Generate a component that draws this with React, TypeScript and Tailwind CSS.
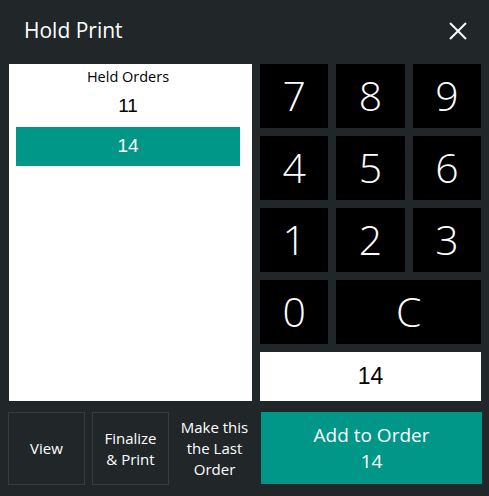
import React from "react";

const keys = ["7", "8", "9", "4", "5", "6", "1", "2", "3"];

export default function App() {
  return (
    <div className="w-[489px] h-[496px] bg-[#212729] text-white overflow-hidden [font-family:'Open_Sans','Noto_Sans',sans-serif]">
      {/* Header */}
      <div className="h-[64px] flex items-center justify-between pl-[24px] pr-[22px] pb-[4px]">
        <h1 className="text-[21px] leading-none">Hold Print</h1>
        <svg width="18" height="18" viewBox="0 0 18 18" className="mt-[1px]">
          <path d="M1 1 L17 17 M17 1 L1 17" stroke="#fff" strokeWidth="2" />
        </svg>
      </div>

      {/* Body */}
      <div className="flex gap-[8px] pl-[9px]">
        <div className="w-[243px] h-[337px] bg-white text-black flex flex-col">
          <div className="w-[238px] flex flex-col items-center">
            <div className="text-[14.5px] leading-none mt-[6px] h-[14px]">Held Orders</div>
            <div className="mt-[9px] h-[26px] flex items-center text-[19px] [font-family:'Liberation_Sans',Arial,sans-serif]">11</div>
          </div>
          <div className="mt-[8px] ml-[7px] w-[224px] h-[39px] bg-[#009688] text-white flex items-center justify-center text-[19px] [font-family:'Liberation_Sans',Arial,sans-serif]">
            14
          </div>
        </div>

        <div className="w-[221px] flex flex-col gap-[8px]">
          <div className="grid grid-cols-3 gap-[8px]">
            {keys.map((k) => (
              <button key={k} className="h-[64px] bg-black text-white text-[41px] font-light flex items-center justify-center">
                {k}
              </button>
            ))}
            <button className="h-[64px] bg-black text-white text-[41px] font-light flex items-center justify-center">0</button>
            <button className="col-span-2 h-[64px] bg-black text-white text-[41px] font-light flex items-center justify-center">C</button>
          </div>
          <div className="h-[49px] bg-white text-black text-[23px] flex items-center justify-center [font-family:'Liberation_Sans',Arial,sans-serif]">14</div>
        </div>
      </div>

      {/* Footer */}
      <div className="flex gap-[8px] pl-[8px] mt-[11px]">
        <div className="flex gap-[7px]">
          <button className="w-[77px] h-[73px] border border-[#373d3f] text-[15px] flex items-center justify-center">View</button>
          <button className="w-[77px] h-[73px] border border-[#373d3f] text-[15px] leading-[21px] flex items-center justify-center text-center">
            Finalize
            <br />& Print
          </button>
          <button className="w-[77px] h-[73px] text-[15px] leading-[21px] flex items-center justify-center text-center">
            Make this the Last Order
          </button>
        </div>
        <button className="w-[221px] h-[72px] bg-[#009688] text-white text-[19px] leading-[26px] flex flex-col items-center justify-center">
          <span>Add to Order</span>
          <span>14</span>
        </button>
      </div>
    </div>
  );
}
